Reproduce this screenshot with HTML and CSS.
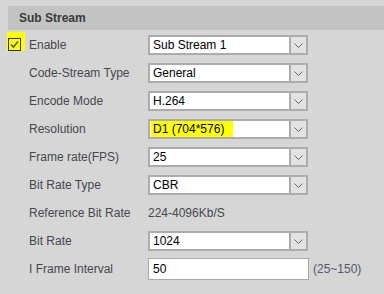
FILE: index.html
```html
<!DOCTYPE html>
<html lang="en">
<head>
    <meta charset="UTF-8">
    <title>Sub Stream</title>
    <link rel="stylesheet" href="styles.css">
</head>
<body>
    <div class="panel">
        <div class="panel-title">Sub Stream</div>
        <div class="form">
            <div class="row">
                <div class="label">
                    <span class="check-mark">
                        <svg width="13" height="13" viewBox="0 0 13 13">
                            <rect x="0.5" y="0.5" width="12" height="12" fill="#ffff00" stroke="#333" stroke-width="1"></rect>
                            <polyline points="3,6.5 5.5,9 10,3.5" fill="none" stroke="#555511" stroke-width="1.6"></polyline>
                        </svg>
                    </span>
                    Enable
                </div>
                <div class="select"><span class="value">Sub Stream 1</span><span class="arrow"><svg width="9" height="5" viewBox="0 0 9 5"><polyline points="0.5,0.5 4.5,4.5 8.5,0.5" fill="none" stroke="#666" stroke-width="1"></polyline></svg></span></div>
            </div>
            <div class="row">
                <div class="label">Code-Stream Type</div>
                <div class="select"><span class="value">General</span><span class="arrow"><svg width="9" height="5" viewBox="0 0 9 5"><polyline points="0.5,0.5 4.5,4.5 8.5,0.5" fill="none" stroke="#666" stroke-width="1"></polyline></svg></span></div>
            </div>
            <div class="row">
                <div class="label">Encode Mode</div>
                <div class="select"><span class="value">H.264</span><span class="arrow"><svg width="9" height="5" viewBox="0 0 9 5"><polyline points="0.5,0.5 4.5,4.5 8.5,0.5" fill="none" stroke="#666" stroke-width="1"></polyline></svg></span></div>
            </div>
            <div class="row">
                <div class="label">Resolution</div>
                <div class="select"><span class="value"><span class="marker">D1 (704*576)</span></span><span class="arrow"><svg width="9" height="5" viewBox="0 0 9 5"><polyline points="0.5,0.5 4.5,4.5 8.5,0.5" fill="none" stroke="#666" stroke-width="1"></polyline></svg></span></div>
            </div>
            <div class="row">
                <div class="label">Frame rate(FPS)</div>
                <div class="select"><span class="value">25</span><span class="arrow"><svg width="9" height="5" viewBox="0 0 9 5"><polyline points="0.5,0.5 4.5,4.5 8.5,0.5" fill="none" stroke="#666" stroke-width="1"></polyline></svg></span></div>
            </div>
            <div class="row">
                <div class="label">Bit Rate Type</div>
                <div class="select"><span class="value">CBR</span><span class="arrow"><svg width="9" height="5" viewBox="0 0 9 5"><polyline points="0.5,0.5 4.5,4.5 8.5,0.5" fill="none" stroke="#666" stroke-width="1"></polyline></svg></span></div>
            </div>
            <div class="row">
                <div class="label">Reference Bit Rate</div>
                <div class="plain">224-4096Kb/S</div>
            </div>
            <div class="row">
                <div class="label">Bit Rate</div>
                <div class="select"><span class="value">1024</span><span class="arrow"><svg width="9" height="5" viewBox="0 0 9 5"><polyline points="0.5,0.5 4.5,4.5 8.5,0.5" fill="none" stroke="#666" stroke-width="1"></polyline></svg></span></div>
            </div>
            <div class="row">
                <div class="label">I Frame Interval</div>
                <div class="text-input">50</div>
                <div class="hint">(25~150)</div>
            </div>
        </div>
    </div>
</body>
</html>
```

FILE: styles.css
```css
body {
    margin: 0;
    background-color: #d6d6d6;
    font-family: "Liberation Sans", Arial, sans-serif;
    font-size: 12px;
    color: #46464f;
}

.panel {
    padding: 6px 0 0 8px;
}

.panel-title {
    height: 24px;
    line-height: 24px;
    padding-left: 11px;
    background-color: #c3c3c3;
    font-weight: bold;
    color: #3a3a3a;
}

.form {
    padding-top: 1px;
}

.row {
    display: flex;
    align-items: center;
    height: 28px;
}

.label {
    position: relative;
    width: 119px;
    padding-left: 21px;
    display: flex;
    align-items: center;
}

.check-mark {
    position: absolute;
    left: -1px;
    top: -6px;
    width: 18px;
    height: 19px;
    background-color: #ffff00;
}

.check-mark svg {
    position: absolute;
    left: 1px;
    top: 6px;
}

.select {
    display: flex;
    width: 156px;
    height: 16px;
    border: 2px solid #acacac;
    background-color: #fff;
    color: #000;
}

.value {
    flex: 1;
    padding-left: 3px;
    line-height: 16px;
}

.marker {
    display: inline-block;
    background-color: #ffff00;
    padding: 0 9px 0 2px;
    margin-left: -2px;
    line-height: 16px;
}

.arrow {
    width: 15px;
    border-left: 2px solid #acacac;
    background-color: #e2e2e2;
    display: flex;
    align-items: center;
    justify-content: center;
}

.plain {
    line-height: 16px;
}

.text-input {
    width: 155px;
    height: 20px;
    line-height: 20px;
    padding-left: 4px;
    border: 1px solid #a9a9a9;
    background-color: #fff;
    color: #000;
}

.hint {
    margin-left: 4px;
    color: #555570;
}
```
